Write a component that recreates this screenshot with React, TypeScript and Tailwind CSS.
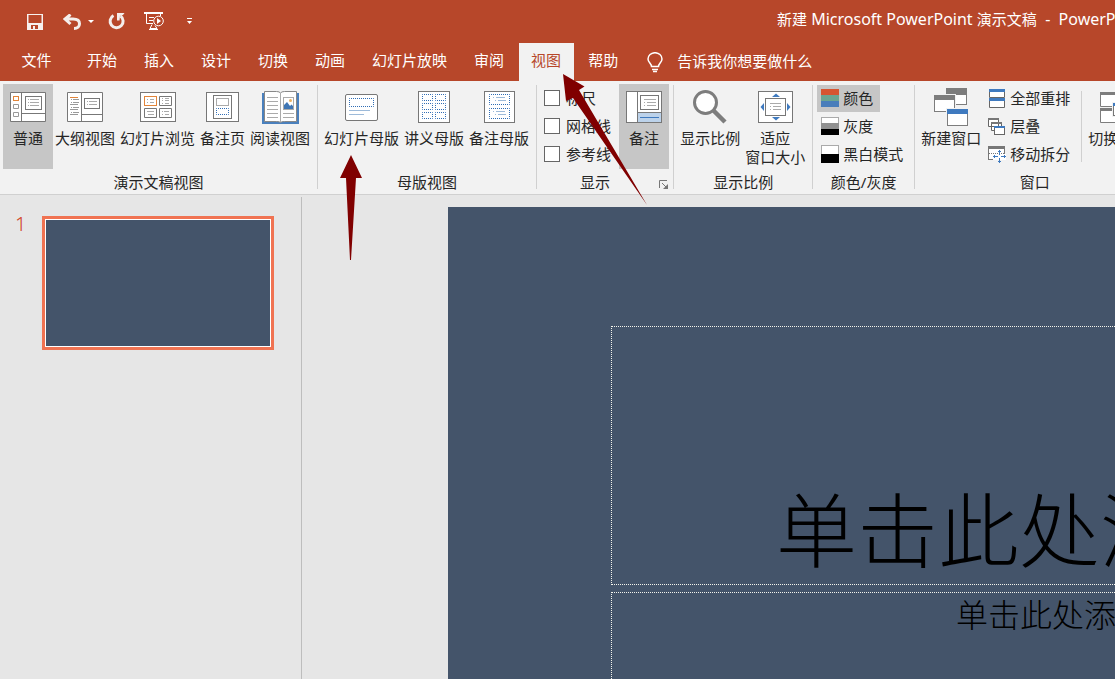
import type React from "react";

const tabs = ["开始", "插入", "设计", "切换", "动画", "幻灯片放映", "审阅", "视图", "帮助"];

type IconProps = { w: number; h: number; children: React.ReactNode };

const Icon: React.FC<IconProps> = ({ w, h, children }) => (
  <svg width={w} height={h} viewBox={`0 0 ${w} ${h}`} fill="none" className="shrink-0" aria-hidden="true">
    {children}
  </svg>
);

const SaveIcon = () => (
  <Icon w={16} h={16}>
    <path d="M0 0h16v16H0zM1.500 1v8h13V1zM4 11v4h2v-3h2v3h3v-4z" fill="#f7f1ef" fillRule="evenodd" />
  </Icon>
);

const UndoIcon = () => (
  <Icon w={18} h={16}>
    <path d="M7.5 0.5L2 5l5.500 5M2.500 5H10c4.500 0 6.500 2 6.500 4.700S14.500 14.500 11 14.500" stroke="#f4eeec" strokeWidth="3" />
  </Icon>
);

const RedoIcon = () => (
  <Icon w={18} h={17}>
    <path d="M5.500 2.500A6.500 6.500 0 1 0 12.500 3" stroke="#f4eeec" strokeWidth="3" />
    <path d="M9 0h7.500l-1.500 2-3 1-.5 4.500L9 7.500z" fill="#f4eeec" />
  </Icon>
);

const SlideShowIcon = () => (
  <Icon w={20} h={19}>
    <path d="M0 1h19" stroke="#fff" strokeWidth="2" />
    <path d="M2.500 2v9.500H9M16.500 2v2M5 5.500h5M5 8.500h4M8 12.500l-2 4h7l-2-3M5 17.500h9" stroke="#fff" />
    <circle cx="14.500" cy="9" r="4.800" stroke="#fff" />
    <path d="M13 6l4 3-4 3z" fill="#fff" />
  </Icon>
);

const BulbIcon = () => (
  <Icon w={16} h={21}>
    <path
      d="M4.500 14.500c0-3-3.500-4-3.500-7.500a7 6.300 0 0 1 14 0c0 3.500-3.500 4.500-3.500 7.500zM5 17.500h6M6 19.500h4"
      stroke="#fff"
      strokeWidth="1.500"
    />
  </Icon>
);

const NormalIcon = () => (
  <Icon w={36} h={30}>
    <path d="M.5.5h35v29H.5zM11.500.5v29M11.500 21.500h24" fill="#fff" stroke="#777" />
    <rect x="3.500" y="4.500" width="5" height="4" stroke="#e2853a" />
    <path d="M3.500 12.500h5v4h-5zM3.500 20.500h5v4h-5z" stroke="#999" />
    <rect x="15.500" y="4.500" width="16" height="13" stroke="#777" />
    <path d="M18 7.500h1M20 7.500h9M18 10.500h1M20 10.500h9M18 13.500h1M20 13.500h9" stroke="#aaa" />
  </Icon>
);

const OutlineIcon = () => (
  <Icon w={36} h={30}>
    <path d="M.5.5h35v29H.5zM14.500.5v29M14.500 22.500h21" fill="#fff" stroke="#777" />
    <path d="M3 5.500h8" stroke="#e2853a" />
    <path
      d="M4 7.500h1M6 7.500h6M4 10.500h1M6 10.500h6M3 12.500h8M4 15.500h1M6 15.500h6M3 17.500h8M4 20.500h1M6 20.500h6M3 22.500h8"
      stroke="#999"
    />
    <rect x="17.500" y="6.500" width="15" height="10" stroke="#777" />
    <path d="M20 9.500h1M22 9.500h8M20 12.500h1M22 12.500h8" stroke="#aaa" />
  </Icon>
);

const SorterIcon = () => (
  <Icon w={36} h={30}>
    <rect x=".5" y=".5" width="35" height="29" fill="#fff" stroke="#777" />
    <rect x="4.500" y="4.500" width="12" height="9" stroke="#e2853a" />
    <path d="M19.500 4.500h12v9h-12zM4.500 16.500h12v9h-12zM19.500 16.500h12v9h-12z" stroke="#777" />
    <path
      d="M7 7.500h1M10 7.500h4M7 10.500h1M10 10.500h4M22 6.500h1M25 6.500h4M22 8.500h1M25 8.500h4M22 11.500h1M25 11.500h4M7 19.500h7M8 22.500h6M22 19.500h1M24 19.500h5M22 22.500h1M25 22.500h4"
      stroke="#aaa"
    />
  </Icon>
);

const NotesPageIcon = () => (
  <Icon w={33} h={30}>
    <rect x=".5" y=".5" width="32" height="29" fill="#fff" stroke="#777" />
    <rect x="7.500" y="3.500" width="18" height="23" stroke="#777" />
    <rect x="10.500" y="6.500" width="12" height="7" stroke="#aaa" />
    <rect x="10.500" y="16.500" width="12" height="6" stroke="#2f6db5" strokeDasharray="1 1" strokeDashoffset=".5" />
  </Icon>
);

const ReadingIcon = () => (
  <Icon w={37} h={33}>
    <path d="M0 2h37v31H0z" fill="#4a80bd" />
    <path d="M2.500.5h12q3 0 4 1.500 1-1.500 4-1.500h12v30h-12q-3 0-4 1-1-1-4-1h-12z" fill="#fff" stroke="#888" />
    <path d="M18.500 2v29" stroke="#aaa" />
    <path
      d="M5 6.500h11M5 10.500h11M5 14.500h11M5 18.500h11M5 22.500h11M5 26.500h11M21 22.500h11M21 26.500h11"
      stroke="#aaa"
    />
    <rect x="21.500" y="6.500" width="10" height="12" stroke="#aaa" />
    <path d="M22 18v-4l3-3 3 4 1.500-1.500L31 15v3z" fill="#4076b4" />
    <circle cx="28.500" cy="9.500" r="1.500" fill="#eeb160" />
  </Icon>
);

const SlideMasterIcon = () => (
  <Icon w={33} h={27}>
    <rect x=".5" y=".5" width="32" height="26" rx="1.500" fill="#fff" stroke="#777" />
    <rect x="4.500" y="4.500" width="24" height="8" stroke="#2f6db5" strokeDasharray="1 1" strokeDashoffset=".5" />
    <path d="M4 16.500h21M4 20.500h15" stroke="#9dbad9" />
  </Icon>
);

const HandoutMasterIcon = () => (
  <Icon w={32} h={32}>
    <rect x=".5" y=".5" width="31" height="31" fill="#fff" stroke="#777" />
    <path
      d="M4.500 3.500h10v6h-10zM17.500 3.500h10v6h-10zM4.500 12.500h10v6h-10zM17.500 12.500h10v6h-10zM4.500 21.500h10v6h-10zM17.500 21.500h10v6h-10z"
      stroke="#2f6db5"
      strokeDasharray="1 1"
      strokeDashoffset=".5"
    />
  </Icon>
);

const NotesMasterIcon = () => (
  <Icon w={31} h={32}>
    <rect x=".5" y=".5" width="30" height="31" fill="#fff" stroke="#777" />
    <path
      d="M5.500 3.500h20v10h-20zM5.500 17.500h20v10h-20z"
      stroke="#2f6db5"
      strokeDasharray="1 1"
      strokeDashoffset=".5"
    />
    <path d="M9 6.500h1M12 6.500h9M11 9.500h1M14 9.500h8M9 20.500h1M12 20.500h9M11 23.500h1M14 23.500h8" stroke="#9dbad9" />
  </Icon>
);

const NotesIcon = () => (
  <Icon w={36} h={32}>
    <rect x=".5" y=".5" width="35" height="31" fill="#fff" stroke="#777" />
    <path d="M12 22h23v9H12z" fill="#bcd2ea" />
    <path d="M11.500.5v31M11.500 21.500h24" stroke="#777" />
    <path d="M14 26.500h19" stroke="#3f7abf" />
    <rect x="14.500" y="4.500" width="18" height="14" stroke="#777" />
    <path d="M18 8.500h12M18 11.500h1M21 11.500h9M18 14.500h1M21 14.500h9" stroke="#aaa" />
  </Icon>
);

const ZoomIcon = () => (
  <Icon w={34} h={34}>
    <path d="M20 20l12 12" stroke="#7d7d7d" strokeWidth="4.500" />
    <circle cx="12.500" cy="12.500" r="11" fill="#fff" stroke="#7d7d7d" strokeWidth="3" />
  </Icon>
);

const FitIcon = () => (
  <Icon w={35} h={32}>
    <rect x=".5" y=".5" width="34" height="31" fill="#fff" stroke="#777" />
    <rect x="7.500" y="7.500" width="20" height="17" stroke="#777" />
    <path d="M12 12.500h11M12 15.500h1M15 15.500h8M12 18.500h1M15 18.500h8" stroke="#aaa" />
    <path d="M14 6l4-3.500L22 6zM14 26l4 3.500L22 26zM6 12v8l-3.500-4zM29 12v8l3.500-4z" fill="#3f7abf" />
  </Icon>
);

const ColorIcon = () => (
  <Icon w={18} h={18}>
    <path d="M0 0h18v6H0z" fill="#d65532" />
    <path d="M0 6h18v6H0z" fill="#6ba592" />
    <path d="M0 12h18v6H0z" fill="#4a7ebb" />
  </Icon>
);

const GrayIcon = () => (
  <Icon w={18} h={18}>
    <rect x=".5" y=".5" width="17" height="17" fill="#fff" stroke="#aaa" />
    <path d="M0 6h18v6H0z" fill="#919191" />
    <path d="M0 12h18v6H0z" fill="#000" />
  </Icon>
);

const BlackWhiteIcon = () => (
  <Icon w={18} h={18}>
    <rect x=".5" y=".5" width="17" height="17" fill="#fff" stroke="#aaa" />
    <path d="M0 9h18v9H0z" fill="#000" />
  </Icon>
);

const NewWindowIcon = () => (
  <Icon w={34} h={38}>
    <rect x="12.500" y=".5" width="20" height="16" fill="#fff" stroke="#7d7d7d" />
    <path d="M12 0h21v7H12z" fill="#7d7d7d" />
    <path d="M0 6h22v19H0z" fill="#f2f2f2" />
    <rect x=".5" y="7.500" width="20" height="16" fill="#fff" stroke="#7d7d7d" />
    <path d="M0 7h21v5H0z" fill="#7d7d7d" />
    <path d="M12 20h22v18H12z" fill="#f2f2f2" />
    <rect x="13.500" y="21.500" width="20" height="16" fill="#fff" stroke="#7d7d7d" />
    <path d="M13 21h21v5H13z" fill="#3f7abf" />
  </Icon>
);

const ArrangeIcon = () => (
  <Icon w={18} h={19}>
    <path d="M1.500.5h15v8h-15zM1.500 9.500h15v9h-15z" fill="#fff" stroke="#666" />
    <path d="M1 0h16v3H1zM1 9h16v3H1z" fill="#3f7abf" />
  </Icon>
);

const CascadeIcon = () => (
  <Icon w={18} h={17}>
    <path d="M.5.5h10v8H.5zM3.500 4.500h10v8h-10z" fill="#fff" stroke="#666" />
    <path d="M0 0h11v2H0zM3 4h11v2H3z" fill="#777" />
    <rect x="6.500" y="8.500" width="10" height="8" fill="#fff" stroke="#666" />
    <path d="M6 8h11v2H6z" fill="#3f7abf" />
  </Icon>
);

const MoveSplitIcon = () => (
  <Icon w={18} h={17}>
    <rect x=".5" y=".5" width="16" height="13" fill="#fff" stroke="#777" />
    <path d="M0 0h17v3H0z" fill="#777" />
    <path d="M1 7.500h16" stroke="#777" strokeDasharray="1 1" />
    <path d="M5 8h13v6H5z" fill="#fff" />
    <path d="M11.500 4v5M11.500 12v5M5 10.500h5M13 10.500h5M10 5.500h3M10 15.500h3M6.500 9v3M16.500 9v3" stroke="#3f7abf" />
  </Icon>
);

const SwitchWindowIcon = () => (
  <Icon w={36} h={31}>
    <path d="M.5.5h18v14H.5zM.5 16.500h18v14H.5zM20.500.5h15v10h-15z" fill="#fff" stroke="#7d7d7d" />
    <path d="M0 0h36v3H0zM0 16h19v3H0z" fill="#7d7d7d" />
    <path d="M12 10h24v15H12z" fill="#f2f2f2" />
    <rect x="13.500" y="11.500" width="22" height="12" fill="#fff" stroke="#777" />
    <path d="M13 11h23v3H13z" fill="#3f7abf" />
  </Icon>
);

const LauncherIcon = () => (
  <Icon w={9} h={9}>
    <path d="M.5 8V.5H8M3 3l5 5" stroke="#777" />
    <path d="M9 4v5H4z" fill="#777" />
  </Icon>
);

type ButtonProps = { icon: React.ReactNode; label: string; second?: string; active?: boolean };

const LargeButton: React.FC<ButtonProps> = ({ icon, label, second, active }) => (
  <button
    type="button"
    aria-pressed={active}
    className={`flex h-[85px] shrink-0 flex-col items-center gap-[3px] pt-1 ${
      active ? "w-[50px] bg-[#c6c6c6]" : "px-0.5 hover:bg-[#d8d8d8]"
    }`}
  >
    <span className="flex h-[38px] items-center">{icon}</span>
    <span className="leading-[19px]">
      {label}
      {second && <span className="block">{second}</span>}
    </span>
  </button>
);

const SmallButton: React.FC<ButtonProps> = ({ icon, label, active }) => (
  <button
    type="button"
    aria-pressed={active}
    className={`flex h-[27px] items-center gap-1 pr-[7px] pb-px pl-1 ${
      active ? "bg-[#c6c6c6]" : "hover:bg-[#d8d8d8]"
    }`}
  >
    {icon}
    {label}
  </button>
);

const Group: React.FC<{ title: string; launcher?: boolean; children: React.ReactNode }> = ({
  title,
  launcher,
  children,
}) => (
  <section aria-label={title} className="flex shrink-0">
    <div className="flex flex-col">
      <div className="flex h-[85px]">{children}</div>
      <div className="flex h-[25px] items-center pt-px">
        <span className="flex-1 text-center">{title}</span>
        {launcher && (
          <button type="button" aria-label={`${title}选项`} className="flex w-5 items-center justify-center pt-1">
            <LauncherIcon />
          </button>
        )}
      </div>
    </div>
    <div className="mt-px h-[104px] w-px bg-[#d0d0d0]" />
  </section>
);

const TitleBar = () => (
  <div className="flex h-[43px] items-center whitespace-nowrap text-white">
    <div className="flex w-[777px] shrink-0 items-center pl-[27px]">
      <button type="button" aria-label="保存">
        <SaveIcon />
      </button>
      <button type="button" aria-label="撤消" className="ml-5 flex items-center gap-[7px]">
        <UndoIcon />
        <Icon w={6} h={3}>
          <path d="M0 0h6L3 3z" fill="#fff" />
        </Icon>
      </button>
      <button type="button" aria-label="重复" className="ml-[14px]">
        <RedoIcon />
      </button>
      <button type="button" aria-label="从头开始放映" className="ml-[18px]">
        <SlideShowIcon />
      </button>
      <button type="button" aria-label="自定义快速访问工具栏" className="ml-[23px]">
        <Icon w={5} h={7}>
          <path d="M0 .5h5" stroke="#fff" />
          <path d="M0 3h5L2.500 6z" fill="#fff" />
        </Icon>
      </button>
    </div>
    <h1 className="pb-1.5 text-base whitespace-pre">
      <span className="text-[15px]">新建</span> Microsoft PowerPoint <span className="text-[15px]">演示文稿</span>
      {"  -  PowerPoint"}
    </h1>
  </div>
);

const TabBar = () => (
  <nav className="flex h-[38px] items-stretch gap-0.5 whitespace-nowrap text-white">
    <button type="button" className="w-[73px] shrink-0 pb-1">
      文件
    </button>
    {tabs.map((tab) => (
      <button
        key={tab}
        type="button"
        className={`shrink-0 pr-[13px] pb-1 pl-3 ${tab === "视图" ? "bg-[#f2f2f2] text-[#b7472a]" : ""}`}
      >
        {tab}
      </button>
    ))}
    <button type="button" className="ml-[14px] flex shrink-0 items-center gap-[14px]">
      <BulbIcon />
      <span className="pb-0.5">告诉我你想要做什么</span>
    </button>
  </nav>
);

const Ribbon = () => (
  <div className="flex shrink-0 overflow-hidden border-b border-[#d0d0d0] bg-[#f2f2f2] pt-[3px] whitespace-nowrap">
    <Group title="演示文稿视图">
      <div className="flex pr-[5px] pl-[3px]">
        <LargeButton icon={<NormalIcon />} label="普通" active />
        <div className="flex gap-px">
          <LargeButton icon={<OutlineIcon />} label="大纲视图" />
          <LargeButton icon={<SorterIcon />} label="幻灯片浏览" />
          <LargeButton icon={<NotesPageIcon />} label="备注页" />
          <LargeButton icon={<ReadingIcon />} label="阅读视图" />
        </div>
      </div>
    </Group>
    <Group title="母版视图">
      <div className="flex gap-px pr-[5px] pl-1">
        <LargeButton icon={<SlideMasterIcon />} label="幻灯片母版" />
        <LargeButton icon={<HandoutMasterIcon />} label="讲义母版" />
        <LargeButton icon={<NotesMasterIcon />} label="备注母版" />
      </div>
    </Group>
    <Group title="显示" launcher>
      <div className="flex gap-2 pr-1 pl-[7px]">
        <div className="flex flex-col gap-px pt-px">
          {["标尺", "网格线", "参考线"].map((name) => (
            <label key={name} className="flex h-[27px] items-center gap-1.5 pb-px">
              <input
                type="checkbox"
                className="size-4 appearance-none border border-[#666] bg-white checked:bg-[#b7472a]"
              />
              {name}
            </label>
          ))}
        </div>
        <LargeButton icon={<NotesIcon />} label="备注" active />
      </div>
    </Group>
    <Group title="显示比例">
      <div className="flex gap-px pr-[5px] pl-1">
        <LargeButton icon={<ZoomIcon />} label="显示比例" />
        <LargeButton icon={<FitIcon />} label="适应" second="窗口大小" />
      </div>
    </Group>
    <Group title="颜色/灰度">
      <div className="flex flex-col items-start gap-px px-1 pt-px">
        <SmallButton icon={<ColorIcon />} label="颜色" active />
        <SmallButton icon={<GrayIcon />} label="灰度" />
        <SmallButton icon={<BlackWhiteIcon />} label="黑白模式" />
      </div>
    </Group>
    <Group title="窗口">
      <div className="flex px-1">
        <LargeButton icon={<NewWindowIcon />} label="新建窗口" />
        <div className="ml-px flex flex-col items-start gap-px pt-px">
          <SmallButton icon={<ArrangeIcon />} label="全部重排" />
          <SmallButton icon={<CascadeIcon />} label="层叠" />
          <SmallButton icon={<MoveSplitIcon />} label="移动拆分" />
        </div>
        <div className="mx-1 mt-[7px] h-[71px] w-px bg-[#d0d0d0]" />
        <LargeButton icon={<SwitchWindowIcon />} label="切换窗口" />
      </div>
    </Group>
  </div>
);

const SlidePanel = () => (
  <aside className="mt-0.5 w-[302px] shrink-0 border-r border-[#bdbdbd]">
    <div className="flex pt-[19px] pl-[15px]">
      <span className="w-[27px] text-xl leading-4 font-light text-[#d24726]">1</span>
      <button type="button" aria-label="幻灯片 1" className="h-[134px] w-[232px] border-3 border-[#f07352] bg-white p-px">
        <span className="block h-full bg-[#44546a]" />
      </button>
    </div>
  </aside>
);

const Slide = () => (
  <main className="min-w-0 flex-1 overflow-hidden pt-3 pl-[146px]">
    <div className="flex h-[734px] w-[1304px] flex-col items-center gap-[7px] bg-[#44546a] pt-[119px] font-extralight text-black">
      <div className="flex h-[259px] w-[978px] items-end justify-center border border-dotted border-[#f4f4ec]">
        <h2 className="text-[81px] leading-[108px]">单击此处添加标题</h2>
      </div>
      <div className="h-[177px] w-[978px] border border-dotted border-[#f4f4ec] text-center">
        <p className="text-[32px] leading-[44px]">单击此处添加副标题</p>
      </div>
    </div>
  </main>
);

// red pointers drawn over the window
const Arrows = () => (
  <svg className="pointer-events-none absolute top-0 left-0" width="700" height="280" viewBox="0 0 700 280" aria-hidden="true">
    <path d="M351 155l11 23h-6l-5 82h-1l-4-82h-6z" fill="#800000" />
    <path d="M563 74l21.500 12.500-5.500 3.500 68 115-74-107-7 3z" fill="#800000" />
  </svg>
);

export default function App() {
  return (
    <div className="relative flex h-screen flex-col overflow-hidden bg-[#e6e6e6] font-['Noto_Sans','Noto_Sans_CJK_SC',sans-serif] text-[15px] text-[#262626]">
      <header className="shrink-0 bg-[#b7472a]">
        <TitleBar />
        <TabBar />
      </header>
      <Ribbon />
      <div className="flex min-h-0 flex-1">
        <SlidePanel />
        <Slide />
      </div>
      <Arrows />
    </div>
  );
}
